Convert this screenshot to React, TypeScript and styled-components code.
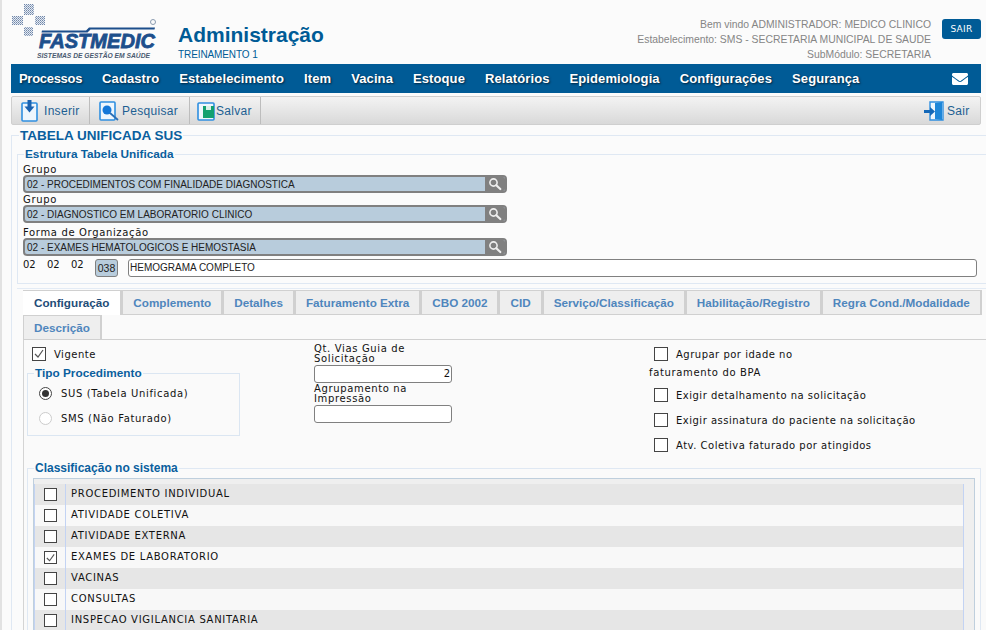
import React from 'react'
import styled, { createGlobalStyle } from 'styled-components'
import { FaEnvelope } from 'react-icons/fa'

const blue = '#005b96'
const legendBlue = '#0a5f9e'
const fieldGrey = '#808080'
const fieldFill = '#b8ccdc'

const GlobalStyle = createGlobalStyle`
  html, body {
    margin: 0;
    padding: 0;
    height: 630px;
    overflow: hidden;
    background: #fbfbfb;
  }
  * {
    box-sizing: border-box;
  }
`

const Page = styled.div`
  width: 986px;
  height: 630px;
  overflow: hidden;
  padding-left: 9px;
  border-left: 2px solid #e2e2e2;
  background: #fbfbfb;
  font-family: 'Liberation Sans', Arial, sans-serif;
`

const Header = styled.header`
  display: flex;
  align-items: flex-start;
  width: 970px;
  height: 64px;
`

const LogoWrap = styled.div`
  width: 178px;
  height: 64px;
  margin-left: -11px;
  flex: none;
`

const TitleBlock = styled.div`
  padding-top: 21px;
`

const Title = styled.h1`
  margin: 0;
  font-size: 21px;
  line-height: 27px;
  font-weight: bold;
  color: ${blue};
`

const Subtitle = styled.div`
  margin-top: 1px;
  font-size: 10px;
  line-height: 12px;
  letter-spacing: -0.1px;
  color: ${blue};
`

const UserInfo = styled.div`
  margin-left: auto;
  padding-top: 17px;
  text-align: right;
  font-size: 10.4px;
  line-height: 15px;
  color: #858585;
`

const LogoutButton = styled.button`
  width: 39px;
  height: 20px;
  margin: 19px 0 0 11px;
  padding: 0;
  border: 0;
  border-radius: 3px;
  background: ${blue};
  color: #fff;
  font-family: 'DejaVu Sans', sans-serif;
  font-size: 9px;
  letter-spacing: 0.3px;
`

const NavBar = styled.nav`
  display: flex;
  align-items: center;
  gap: 20px;
  width: 970px;
  height: 29px;
  padding: 0 13px 0 8px;
  background: ${blue};
`

const NavItem = styled.a`
  font-size: 13px;
  letter-spacing: 0.1px;
  font-weight: bold;
  color: #fff;
  text-shadow: 1px 1px 2px #00243d;

  &:first-child {
    letter-spacing: -0.3px;
  }
`

const NavMail = styled.span`
  display: flex;
  margin-left: auto;
  color: #fff;
  font-size: 16px;
`

const Toolbar = styled.div`
  display: flex;
  align-items: stretch;
  width: 970px;
  height: 29px;
  margin-top: 3px;
  border: 1px solid #cfcfcf;
  border-radius: 2px;
  background: linear-gradient(#f3f3f3, #d9d9d9);
`

const ToolButton = styled.div<{ $width: number; $gap?: number; $pad?: number }>`
  display: flex;
  align-items: center;
  gap: ${(p) => p.$gap ?? 5}px;
  width: ${(p) => p.$width}px;
  padding-left: ${(p) => p.$pad ?? 9}px;
  border-right: 1px solid #bdbdbd;
  font-size: 12px;
  letter-spacing: 0.3px;
  color: #1d5f92;
`

const ExitButton = styled(ToolButton)`
  margin-left: auto;
  margin-right: 10px;
  border-right: 0;
`

const OuterFieldset = styled.fieldset`
  margin: 2px 0 0;
  padding: 0 0 0 5px;
  width: 975px;
  height: 530px;
  border: 1px solid #dfe8f3;
  border-right: 0;
  border-bottom: 0;
`

const OuterLegend = styled.legend`
  margin-left: 2px;
  padding: 0 1px;
  font-size: 13.5px;
  line-height: 17px;
  font-weight: bold;
  color: ${legendBlue};
`

const SectionFieldset = styled.fieldset`
  margin: 3px 0 0;
  padding: 2px 0 0 5px;
  height: 137px;
  border: 1px solid #dfe8f3;
  border-right: 0;
`

const SectionLegend = styled.legend`
  margin-left: 1px;
  padding: 0 1px;
  font-size: 11.8px;
  line-height: 14px;
  font-weight: bold;
  color: ${legendBlue};
`

const FieldLabel = styled.div`
  height: 12px;
  font-family: 'DejaVu Sans', sans-serif;
  font-size: 10px;
  line-height: 14px;
  letter-spacing: 0.65px;
  color: #111;
`

const LookupGroup = styled.div<{ $top: number }>`
  margin-top: ${(p) => p.$top}px;
`

const LookupField = styled.div`
  display: flex;
  width: 484px;
  height: 18px;
  border: 2px solid ${fieldGrey};
  border-radius: 4px;
  background: ${fieldFill};
  overflow: hidden;
`

const LookupValue = styled.div`
  flex: 1;
  padding-left: 2px;
  font-size: 10px;
  line-height: 15px;
  color: #222;
`

const LookupButton = styled.div`
  display: flex;
  align-items: center;
  justify-content: center;
  width: 20px;
  background: ${fieldGrey};
`

const CodeRow = styled.div`
  display: flex;
  align-items: flex-start;
  margin-top: 3px;
`

const CodePart = styled.span`
  width: 24px;
  font-family: 'DejaVu Sans', sans-serif;
  font-size: 10px;
  line-height: 12px;
  color: #111;
`

const CodeBox = styled.div`
  width: 23px;
  height: 18px;
  margin-right: 10px;
  border: 1px solid ${fieldGrey};
  border-radius: 3px;
  background: ${fieldFill};
  font-size: 10.5px;
  line-height: 16px;
  text-align: center;
  color: #222;
`

const NameInput = styled.div`
  width: 849px;
  height: 18px;
  padding-left: 1px;
  border: 1px solid ${fieldGrey};
  border-radius: 3px;
  background: #fff;
  font-size: 10px;
  line-height: 16px;
  color: #222;
`

const Divider = styled.div`
  margin: 4px 0 1px 0;
  border-top: 1px solid #e3ebf5;
`

const TabPanel = styled.div`
  margin-left: 6px;
  height: 340px;
  border-left: 1px solid #d4d4d4;
  background: #fafafa;
`

const TabList = styled.div`
  display: flex;
  flex-wrap: wrap;
  width: 960px;
  margin-left: -1px;
`

const Tab = styled.div<{ $active?: boolean }>`
  height: 25px;
  padding: 0 ${(p) => (p.$active ? 11 : 10)}px;
  border: 1px solid #d0d0d0;
  border-width: 1px 2px ${(p) => (p.$active ? 0 : 1)}px ${(p) => (p.$active ? 0 : 1)}px;
  background: ${(p) => (p.$active ? '#fff' : '#eeeeee')};
  font-size: 11.7px;
  line-height: 23px;
  font-weight: bold;
  color: ${(p) => (p.$active ? '#1f4d78' : '#4f86bd')};
`

const TabRule = styled.div`
  margin-top: -1px;
  border-top: 1px solid #d0d0d0;
  margin-right: -10px;
`

const Settings = styled.div`
  display: grid;
  grid-template-columns: 287px 335px 1fr;
  height: 121px;
  padding-left: 3px;
`

const Column = styled.div<{ $top?: number }>`
  padding-top: ${(p) => p.$top ?? 0}px;
`

const CheckRow = styled.label<{ $top?: number }>`
  display: flex;
  align-items: center;
  gap: 8px;
  margin-left: 5px;
  margin-top: ${(p) => p.$top ?? 0}px;
  height: 14px;
  font-family: 'DejaVu Sans', sans-serif;
  font-size: 10px;
  letter-spacing: 0.5px;
  color: #111;
`

const Box = styled.span`
  display: flex;
  flex: none;
  width: 14px;
  height: 14px;
  border: 1px solid #444;
  background: #fff;
`

const TipoFieldset = styled.fieldset`
  margin: 5px 0 0;
  padding: 0 0 0 11px;
  width: 213px;
  height: 70px;
  border: 1px solid #dbe6f2;
`

const TipoLegend = styled.legend`
  margin-left: -5px;
  padding: 0 1px;
  font-size: 11.8px;
  line-height: 14px;
  font-weight: bold;
  color: ${legendBlue};
`

const RadioRow = styled.div<{ $top: number }>`
  display: flex;
  align-items: center;
  gap: 9px;
  height: 13px;
  margin-top: ${(p) => p.$top}px;
  font-family: 'DejaVu Sans', sans-serif;
  font-size: 10px;
  letter-spacing: 0.65px;
  color: #111;
`

const Radio = styled.span<{ $on?: boolean }>`
  display: flex;
  align-items: center;
  justify-content: center;
  width: 13px;
  height: 13px;
  border: 1px solid ${(p) => (p.$on ? '#444' : '#ccc')};
  border-radius: 50%;
  background: #fff;

  &::after {
    content: '';
    display: ${(p) => (p.$on ? 'block' : 'none')};
    width: 7px;
    height: 7px;
    border-radius: 50%;
    background: #333;
  }
`

const StackLabel = styled.div`
  width: 120px;
  padding-top: 1px;
  font-family: 'DejaVu Sans', sans-serif;
  font-size: 10px;
  line-height: 10px;
  letter-spacing: 0.65px;
  color: #111;
`

const TextBox = styled.div`
  width: 138px;
  height: 18px;
  margin-top: 1px;
  padding-right: 1px;
  border: 1px solid ${fieldGrey};
  border-radius: 3px;
  background: #fff;
  font-family: 'DejaVu Sans', sans-serif;
  font-size: 10px;
  line-height: 16px;
  text-align: right;
  color: #111;
`

const PlainLine = styled.div`
  margin-top: 6px;
  font-family: 'DejaVu Sans', sans-serif;
  font-size: 10px;
  line-height: 12px;
  letter-spacing: 0.65px;
  color: #111;
`

const ClassFieldset = styled.fieldset`
  margin: 0 0 0 3px;
  padding: 3px 5px 0 5px;
  width: 954px;
  height: 200px;
  border: 1px solid #dfe8f3;
`

const ClassLegend = styled.legend`
  margin-left: 1px;
  padding: 0 1px;
  font-size: 12px;
  line-height: 14px;
  font-weight: bold;
  color: ${legendBlue};
`

const TableWrap = styled.div`
  width: 942px;
  padding: 5px 10px 0 0;
  border: 1px solid #bfcfdd;
  border-bottom: 0;
  background: #efefef;
`

const Row = styled.div<{ $odd: boolean }>`
  display: flex;
  align-items: center;
  height: 21px;
  border-left: 1px solid #c3d3f3;
  border-right: 1px solid #c3d3f3;
  background: ${(p) => (p.$odd ? '#e6e6e6' : '#f8f8f8')};
`

const RowCheck = styled.div`
  display: flex;
  align-items: center;
  justify-content: center;
  width: 31px;
  height: 100%;
  border-right: 1px solid #c3d3f3;
`

const RowBox = styled(Box)`
  width: 13px;
  height: 13px;
`

const RowLabel = styled.span`
  padding: 0 0 2px 5px;
  font-family: 'DejaVu Sans', sans-serif;
  font-size: 10px;
  letter-spacing: 0.7px;
  color: #111;
`

const Tick = () => (
  <svg width="12" height="12" viewBox="0 0 12 12">
    <path d="M2 6l3 3 5-7" fill="none" stroke="#555" strokeWidth="1.2" />
  </svg>
)

const SearchGlyph = () => (
  <svg width="14" height="14" viewBox="0 0 14 14">
    <circle cx="5.5" cy="5.5" r="3.6" fill="none" stroke="#eee" strokeWidth="1.6" />
    <path d="M8.300 8.300l4 3.700" stroke="#eee" strokeWidth="2.200" strokeLinecap="round" />
  </svg>
)

const InsertIcon = () => (
  <svg width="18" height="22" viewBox="0 0 18 22">
    <rect x="1" y="3" width="15" height="18" rx="1" fill="#eef6fd" stroke="#2f8fe0" strokeWidth="1.6" />
    <rect x="6.500" y="0" width="4" height="7" fill="#1a62b0" />
    <path d="M3.500 6.500h10l-5 6z" fill="#1a62b0" />
  </svg>
)

const SearchIcon = () => (
  <svg width="20" height="20" viewBox="0 0 20 20">
    <rect x="1" y="1" width="15" height="18" rx="1" fill="#eef6fd" stroke="#2f8fe0" strokeWidth="1.600" />
    <circle cx="8" cy="9" r="4.500" fill="#1477d8" />
    <path d="M11 12l8 7" stroke="#2a6fb5" strokeWidth="1.800" />
  </svg>
)

const SaveIcon = () => (
  <svg width="18" height="20" viewBox="0 0 18 20">
    <rect x="1" y="2" width="16" height="17" rx="1" fill="#eef6fd" stroke="#2f8fe0" strokeWidth="1.600" />
    <rect x="6" y="5" width="11" height="12" fill="#12a070" />
    <rect x="9" y="5" width="5" height="4" fill="#d8efe6" />
  </svg>
)

const ExitIcon = () => (
  <svg width="20" height="20" viewBox="0 0 20 20">
    <path d="M6 1h13v18H6z" fill="#eef6fd" stroke="#2f8fe0" strokeWidth="1.400" />
    <path d="M11 2l7-1v18l-7-1z" fill="#1e86d8" />
    <path d="M0 9h6V6l5 4.500-5 4.500v-3H0z" fill="#1468b8" />
  </svg>
)

const Logo = () => (
  <svg width="167" height="64" viewBox="0 0 167 64">
    <defs>
      <pattern id="dither" width="2" height="2" patternUnits="userSpaceOnUse">
        <rect width="2" height="2" fill="#e5eaf2" />
        <rect width="1" height="1" fill="#6f86a8" />
        <rect x="1" y="1" width="1" height="1" fill="#93a5c0" />
      </pattern>
    </defs>
    <rect x="24" y="4" width="10" height="11" fill="url(#dither)" />
    <rect x="12" y="16" width="11" height="9" fill="url(#dither)" />
    <rect x="35" y="16" width="10" height="9" fill="url(#dither)" />
    <rect x="24" y="27" width="9" height="9" fill="url(#dither)" />
    <path d="M42 30.500h44l3-3h66l-0.500 2h-64l-3 3h-46z" fill="#1d4f8c" />
    <text x="39" y="48" textLength="116" lengthAdjust="spacingAndGlyphs" fontFamily="'Liberation Sans', Arial, sans-serif" fontSize="20" fontWeight="bold" fontStyle="italic" fill="#1d4f8c" stroke="#1d4f8c" strokeWidth="0.8">
      FASTMEDIC
    </text>
    <text x="37" y="58" textLength="113" lengthAdjust="spacingAndGlyphs" fontFamily="'Liberation Sans', Arial, sans-serif" fontSize="7" fontWeight="bold" fontStyle="italic" fill="#4a5a70">
      SISTEMAS DE GESTÃO EM SAÚDE
    </text>
    <circle cx="153" cy="22" r="2.500" fill="none" stroke="#8a9bb0" />
  </svg>
)

const menu = ['Processos', 'Cadastro', 'Estabelecimento', 'Item', 'Vacina', 'Estoque', 'Relatórios', 'Epidemiologia', 'Configurações', 'Segurança']
const tabs = ['Configuração', 'Complemento', 'Detalhes', 'Faturamento Extra', 'CBO 2002', 'CID', 'Serviço/Classificação', 'Habilitação/Registro', 'Regra Cond./Modalidade', 'Descrição']
const classes = ['PROCEDIMENTO INDIVIDUAL', 'ATIVIDADE COLETIVA', 'ATIVIDADE EXTERNA', 'EXAMES DE LABORATORIO', 'VACINAS', 'CONSULTAS', 'INSPECAO VIGILANCIA SANITARIA']
const lookups = [
  { label: 'Grupo', value: '02 - PROCEDIMENTOS COM FINALIDADE DIAGNOSTICA', top: 0 },
  { label: 'Grupo', value: '02 - DIAGNOSTICO EM LABORATORIO CLINICO', top: 0 },
  { label: 'Forma de Organização', value: '02 - EXAMES HEMATOLOGICOS E HEMOSTASIA', top: 3 },
]

const App: React.FC = () => {
  return (
    <Page>
      <GlobalStyle />
      <Header>
        <LogoWrap>
          <Logo />
        </LogoWrap>
        <TitleBlock>
          <Title>Administração</Title>
          <Subtitle>TREINAMENTO 1</Subtitle>
        </TitleBlock>
        <UserInfo>
          <div>Bem vindo ADMINISTRADOR: MEDICO CLINICO</div>
          <div>Estabelecimento: SMS - SECRETARIA MUNICIPAL DE SAUDE</div>
          <div>SubMódulo: SECRETARIA</div>
        </UserInfo>
        <LogoutButton>SAIR</LogoutButton>
      </Header>

      <NavBar>
        {menu.map((item) => (
          <NavItem key={item}>{item}</NavItem>
        ))}
        <NavMail>
          <FaEnvelope />
        </NavMail>
      </NavBar>

      <Toolbar>
        <ToolButton $width={78}>
          <InsertIcon />
          Inserir
        </ToolButton>
        <ToolButton $width={100} $gap={3}>
          <SearchIcon />
          Pesquisar
        </ToolButton>
        <ToolButton $width={71} $gap={1} $pad={7}>
          <SaveIcon />
          Salvar
        </ToolButton>
        <ExitButton $width={46} $gap={3} $pad={0}>
          <ExitIcon />
          Sair
        </ExitButton>
      </Toolbar>

      <OuterFieldset>
        <OuterLegend>TABELA UNIFICADA SUS</OuterLegend>
        <SectionFieldset>
          <SectionLegend>Estrutura Tabela Unificada</SectionLegend>
          {lookups.map((lookup, index) => (
            <LookupGroup key={index} $top={lookup.top}>
              <FieldLabel>{lookup.label}</FieldLabel>
              <LookupField>
                <LookupValue>{lookup.value}</LookupValue>
                <LookupButton>
                  <SearchGlyph />
                </LookupButton>
              </LookupField>
            </LookupGroup>
          ))}
          <CodeRow>
            <CodePart>02</CodePart>
            <CodePart>02</CodePart>
            <CodePart>02</CodePart>
            <CodeBox>038</CodeBox>
            <NameInput>HEMOGRAMA COMPLETO</NameInput>
          </CodeRow>
        </SectionFieldset>

        <Divider />

        <TabPanel>
          <TabList>
            {tabs.map((tab, index) => (
              <Tab key={tab} $active={index === 0}>
                {tab}
              </Tab>
            ))}
          </TabList>
          <TabRule />

          <Settings>
            <Column>
              <CheckRow $top={7}>
                <Box>
                  <Tick />
                </Box>
                Vigente
              </CheckRow>
              <TipoFieldset>
                <TipoLegend>Tipo Procedimento</TipoLegend>
                <RadioRow $top={7}>
                  <Radio $on />
                  SUS (Tabela Unificada)
                </RadioRow>
                <RadioRow $top={12}>
                  <Radio />
                  SMS (Não Faturado)
                </RadioRow>
              </TipoFieldset>
            </Column>

            <Column $top={3}>
              <StackLabel>Qt. Vias Guia de Solicitação</StackLabel>
              <TextBox>2</TextBox>
              <StackLabel>Agrupamento na Impressão</StackLabel>
              <TextBox />
            </Column>

            <Column>
              <CheckRow $top={7}>
                <Box />
                Agrupar por idade no
              </CheckRow>
              <PlainLine>faturamento do BPA</PlainLine>
              <CheckRow $top={9}>
                <Box />
                Exigir detalhamento na solicitação
              </CheckRow>
              <CheckRow $top={11}>
                <Box />
                Exigir assinatura do paciente na solicitação
              </CheckRow>
              <CheckRow $top={11}>
                <Box />
                Atv. Coletiva faturado por atingidos
              </CheckRow>
            </Column>
          </Settings>

          <ClassFieldset>
            <ClassLegend>Classificação no sistema</ClassLegend>
            <TableWrap>
              {classes.map((name, index) => (
                <Row key={name} $odd={index % 2 === 0}>
                  <RowCheck>
                    <RowBox>{name === 'EXAMES DE LABORATORIO' ? <Tick /> : null}</RowBox>
                  </RowCheck>
                  <RowLabel>{name}</RowLabel>
                </Row>
              ))}
            </TableWrap>
          </ClassFieldset>
        </TabPanel>
      </OuterFieldset>
    </Page>
  )
}

export default App
